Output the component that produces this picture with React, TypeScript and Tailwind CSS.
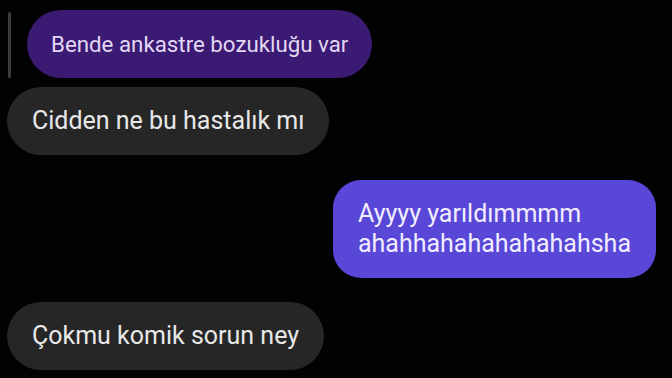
export default function App() {
  return (
    <div className="h-[378px] w-[672px] overflow-hidden bg-[#020202] font-['Roboto','Noto_Sans',sans-serif] text-[25px] leading-[30px]">
      <div className="flex flex-col pt-[10px]">
        <div className="flex items-stretch pl-[8px]">
          <div className="mt-[2px] w-[3px] rounded-full bg-[#3c3c3c]" />
          <div className="ml-[16px] rounded-[34px] bg-[#3b1a74] px-[24px] py-[19px] text-[22.3px] text-[#e2d8f2]">
            Bende ankastre bozukluğu var
          </div>
        </div>

        <div className="mt-[9px] flex pl-[7px]">
          <div className="rounded-[34px] bg-[#262626] px-[25px] py-[19px] text-[#e8e8e8]">
            Cidden ne bu hastalık mı
          </div>
        </div>

        <div className="mt-[25px] flex justify-end pr-[16px]">
          <div className="rounded-[28px] bg-[#5947d8] px-[25px] py-[19px] text-[#f1edff]">
            <div>Ayyyy yarıldımmmm</div>
            <div>ahahhahahahahahahsha</div>
          </div>
        </div>

        <div className="mt-[24px] flex pl-[7px]">
          <div className="rounded-[34px] bg-[#262626] px-[25px] py-[19px] text-[#e8e8e8]">
            Çokmu komik sorun ney
          </div>
        </div>
      </div>
    </div>
  )
}
